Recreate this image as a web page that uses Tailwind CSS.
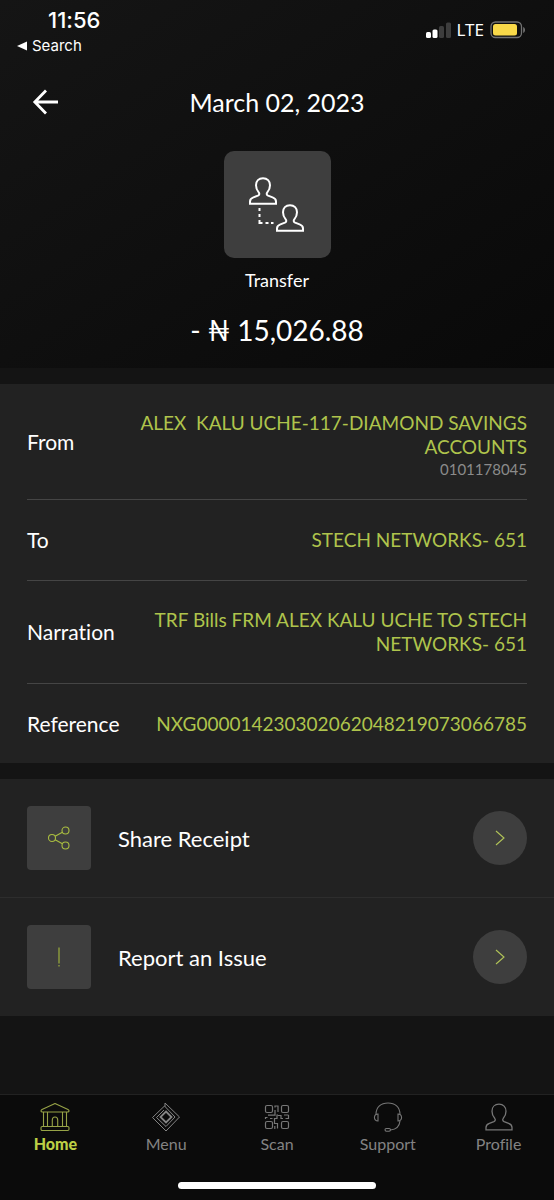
<!DOCTYPE html>
<html lang="en">
<head>
<meta charset="utf-8">
<meta name="viewport" content="width=device-width, initial-scale=1">
<title>Transfer details</title>
<script src="https://cdn.jsdelivr.net/npm/@tailwindcss/browser@4"></script>
</head>
<body class="flex min-h-screen flex-col bg-[#141414] font-['Lato','Noto_Sans',sans-serif] text-white [font-variant-ligatures:none]">

<svg class="hidden" aria-hidden="true">
  <symbol id="person" viewBox="0 0 28 28">
    <path d="M14 1.2c-4.3 0-7 2.9-7 7 0 2.900 1 5.200 2.700 7.100 1 1.200.7 2.700-.8 3.400l-4.500 1.700c-2.400.9-3.400 2-3.400 4v2.400h26v-2.400c0-2-1-3.100-3.400-4l-4.500-1.700c-1.500-.7-1.800-2.200-.8-3.400C20 13.400 21 11.100 21 8.200c0-4.100-2.700-7-7-7z"/>
  </symbol>
</svg>

<header class="bg-linear-to-br from-[#151515] to-[#090909] pb-5">
  <div class="flex h-[76px] items-start justify-between pr-7 pl-4 font-['Inter','Liberation_Sans',sans-serif]">
    <div>
      <div class="mt-2 pl-8 text-[22px] leading-6 font-medium">11:56</div>
      <a href="#" class="mt-1 flex items-center gap-1 text-[15px] leading-5">
        <svg class="h-2.5 w-3" viewBox="0 0 12 10" fill="currentColor" aria-hidden="true"><path d="M11 0.500v9L1 5z"/></svg>
        Search
      </a>
    </div>
    <div class="mt-5 flex items-center gap-1.5">
      <svg class="h-[18px] w-[26px]" viewBox="0 0 26 18" aria-hidden="true">
        <rect x="1" y="11" width="5" height="6" rx="1.500" fill="#fff"/><rect x="7.500" y="8.500" width="5" height="8.500" rx="1.500" fill="#fff"/>
        <rect x="14" y="5" width="5" height="12" rx="1.500" fill="#3d3d3d"/><rect x="21" y="1.500" width="5" height="15.500" rx="1.500" fill="#3d3d3d"/>
      </svg>
      <span class="font-['Noto_Sans',sans-serif] text-[17px] leading-5">LTE</span>
      <svg class="h-[18px] w-9" viewBox="0 0 36 18" aria-hidden="true">
        <rect x="1" y="1" width="30.500" height="15.500" rx="4.500" fill="none" stroke="#727272" stroke-width="1.300"/>
        <rect x="3" y="3" width="24" height="11.500" rx="2.500" fill="#f9d949"/><path d="M33.200 6c2.400 1 2.400 5 0 6z" fill="#727272"/>
      </svg>
    </div>
  </div>

  <div class="grid grid-cols-[1fr_auto_1fr] items-center px-8 pt-2.5">
    <button type="button" aria-label="Back" class="flex h-8 w-8 items-center">
      <svg class="h-7 w-7" viewBox="0 0 28 28" fill="none" stroke="#fff" stroke-width="2.800" aria-hidden="true"><path d="M26 14H3M14 2.500L2.800 14 14 25.500"/></svg>
    </button>
    <h1 class="text-[25px] leading-8">March 02, 2023</h1>
  </div>

  <div class="mt-[33px] flex flex-col items-center">
    <div class="flex h-[107px] w-[107px] items-center justify-center rounded-[10px] bg-[#3e3e3e]">
      <svg class="h-14 w-14" viewBox="0 0 56 56" fill="none" stroke="#fff" stroke-width="2" aria-hidden="true">
        <use href="#person" width="28" height="28"/>
        <use href="#person" x="27" y="27" width="28" height="28"/>
        <path d="M10.500 31v3M10.500 37v3M10.500 43v3h3M16.500 46h3M22 46h2.500"/>
      </svg>
    </div>
    <p class="mt-2.5 text-[18px] leading-6">Transfer</p>
    <p class="mt-5 text-[28px] leading-9">- ₦ 15,026.88</p>
  </div>
</header>

<main class="flex flex-1 flex-col gap-4 pt-4">
  <dl class="bg-[#222] px-[27px] text-[19px] leading-6">
    <div class="flex items-center justify-between gap-5 border-b border-[#454545]">
      <dt class="text-[21px]">From</dt>
      <dd class="pt-[27px] pb-5 text-right text-[#afc44c]">ALEX&nbsp; KALU UCHE-117-DIAMOND SAVINGS ACCOUNTS<span class="block text-[15px] leading-5 text-[#8b8b8b]">0101178045</span></dd>
    </div>
    <div class="flex items-center justify-between gap-5 border-b border-[#454545]">
      <dt class="text-[21px]">To</dt>
      <dd class="py-7 text-right text-[#afc44c]">STECH NETWORKS- 651</dd>
    </div>
    <div class="flex items-center justify-between gap-5 border-b border-[#454545]">
      <dt class="text-[21px]">Narration</dt>
      <dd class="py-[27px] text-right text-[#afc44c]">TRF Bills FRM ALEX KALU UCHE TO STECH NETWORKS- 651</dd>
    </div>
    <div class="flex items-center justify-between gap-5">
      <dt class="text-[21px]">Reference</dt>
      <dd class="pt-7 pb-[27px] text-right text-[#afc44c]">NXG000014230302062048219073066785</dd>
    </div>
  </dl>

  <div class="bg-[#222] text-[22px]">
    <button type="button" class="flex w-full items-center px-[27px] py-[27px]">
      <span class="flex h-16 w-16 items-center justify-center rounded bg-[#3e3e3e]">
        <svg class="h-6 w-6" viewBox="0 0 24 24" fill="none" stroke="#a9bd40" stroke-width="1.100" aria-hidden="true"><circle cx="5" cy="12" r="3.500"/><circle cx="18.500" cy="4.500" r="3.500"/><circle cx="18.500" cy="19.500" r="3.500"/><path d="M8.100 10.300l7.300-4.100M8.100 13.700l7.300 4.100"/></svg>
      </span>
      <span class="ml-[27px] flex-1 text-left">Share Receipt</span>
      <span class="flex h-[54px] w-[54px] items-center justify-center rounded-full bg-[#3e3e3e]">
        <svg class="h-4 w-2.5" viewBox="0 0 10 16" fill="none" stroke="#b2c558" stroke-width="1.100" aria-hidden="true"><path d="M1 1l8 7-8 7"/></svg>
      </span>
    </button>
    <button type="button" class="flex w-full items-center border-t border-[#2d2d2d] px-[27px] py-[27px]">
      <span class="flex h-16 w-16 items-center justify-center rounded bg-[#3e3e3e]">
        <svg class="h-6 w-6" viewBox="0 0 24 24" fill="none" stroke="#95a63c" stroke-width="1.300" aria-hidden="true"><path d="M12 2.500v16M12 20v1.500"/></svg>
      </span>
      <span class="ml-[27px] flex-1 text-left">Report an Issue</span>
      <span class="flex h-[54px] w-[54px] items-center justify-center rounded-full bg-[#3e3e3e]">
        <svg class="h-4 w-2.5" viewBox="0 0 10 16" fill="none" stroke="#b2c558" stroke-width="1.100" aria-hidden="true"><path d="M1 1l8 7-8 7"/></svg>
      </span>
    </button>
  </div>
</main>

<footer class="border-t border-[#222] bg-[#0b0b0b] pb-[11px]">
  <nav class="grid grid-cols-5 pt-[7px] text-[16px] leading-6 text-[#838383]">
    <a href="#" aria-current="page" class="flex flex-col items-center font-black text-[#bdcf45]">
      <svg class="h-[30px] w-[30px]" viewBox="0 0 30 30" fill="none" stroke="#97a347" stroke-width="1.100" stroke-linejoin="round" aria-hidden="true">
        <path d="M15 1.500l13 6c1.600.9 1.200 2.500-.3 2.500H2.300C.8 10 .4 8.400 2 7.500zM3.500 10v14.500M7.500 10v14.500M22.500 10v14.500M26.500 10v14.500M12.300 24.500v-6.500c0-4 5.400-4 5.400 0v6.500"/><rect x="1" y="24.500" width="28" height="4" rx="1.200"/>
      </svg>
      Home
    </a>
    <a href="#" class="flex flex-col items-center">
      <svg class="h-[30px] w-[30px]" viewBox="0 0 30 30" fill="none" stroke="#858585" aria-hidden="true">
        <path d="M14 1l14.500 14L15 29 1.500 15.500 13.500 4l10.500 11-9 9.500L5.500 15.500 13 8"/><path d="M14 1v3.500" /><path d="M15 9.500l5.500 5.500-5.500 5.500L9.500 15z" stroke-width="1.800"/>
      </svg>
      Menu
    </a>
    <a href="#" class="flex flex-col items-center">
      <svg class="h-[30px] w-[30px]" viewBox="0 0 30 30" fill="none" stroke="#777" stroke-width="1.200" aria-hidden="true">
        <rect x="3.500" y="3.500" width="7" height="7" rx="1.500"/><rect x="19.500" y="3.500" width="7" height="7" rx="1.500"/><rect x="3.500" y="19.500" width="7" height="7" rx="1.500"/><rect x="19.500" y="19.500" width="7" height="7" rx="1.500"/>
        <path d="M13 3.500v2M13 8v5.200H6M3.500 17v-1.500h2M8 16.500h2.500M13 4h3v6M16 13h-1v3.500h-2.500v5h3v5M12.800 24v3M16 13.500h3v3h2M22 13h4.500M26.500 13v3.500h-3"/>
      </svg>
      Scan
    </a>
    <a href="#" class="flex flex-col items-center">
      <svg class="h-[30px] w-[30px]" viewBox="0 0 30 30" fill="none" stroke="#777" stroke-width="1.100" aria-hidden="true">
        <path d="M3 12.500C3 5 8 1 15 1s12 4 12 11.500M27 19c-.5 5-4 8.500-9.500 9"/><path d="M5 12c-4.500 0-5 7 0 7zM25 12c4.500 0 5 7 0 7z"/><rect x="12" y="26.500" width="5.500" height="2.700" rx="1.350"/>
      </svg>
      Support
    </a>
    <a href="#" class="flex flex-col items-center">
      <svg class="h-[30px] w-[30px]" viewBox="-1 -1 30 30" fill="none" stroke="#777" stroke-width="1.300" aria-hidden="true"><use href="#person" width="28" height="28"/></svg>
      Profile
    </a>
  </nav>
  <div class="mx-auto mt-[26px] h-[7px] w-[198px] rounded-full bg-white"></div>
</footer>
</body>
</html>
